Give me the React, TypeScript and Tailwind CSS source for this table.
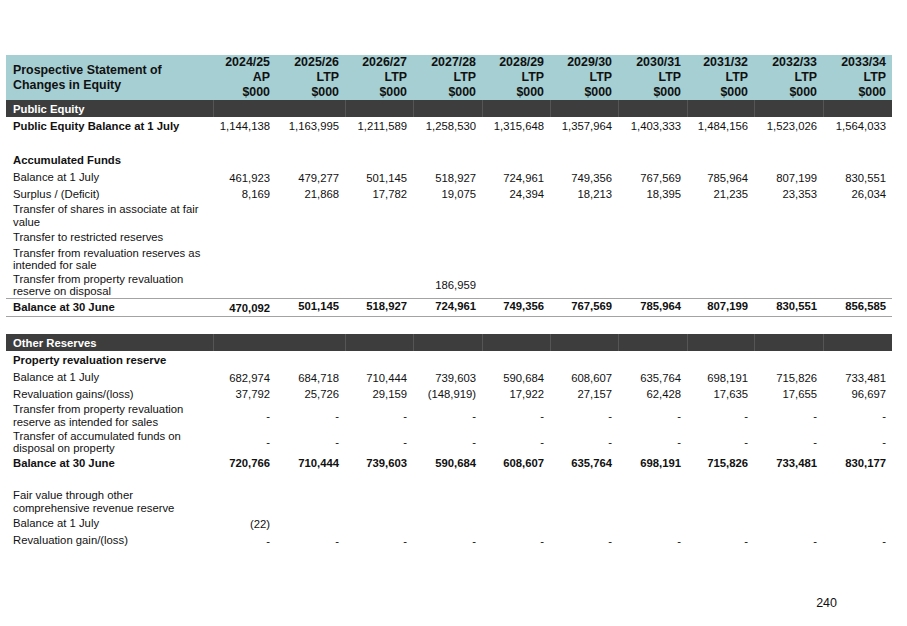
import React from 'react';

type Cell = string | null;

interface RowProps {
  label: React.ReactNode;
  values?: Cell[];
  h: string;
  bold?: boolean;
  boldLabel?: boolean;
  bordered?: boolean;
  firstLow?: boolean;
}

const grid =
  'grid grid-cols-[207px_63px_69px_68px_69px_68px_68px_69px_67px_69px_69px]';

const years = [
  ['2024/25', 'AP'],
  ['2025/26', 'LTP'],
  ['2026/27', 'LTP'],
  ['2027/28', 'LTP'],
  ['2028/29', 'LTP'],
  ['2029/30', 'LTP'],
  ['2030/31', 'LTP'],
  ['2031/32', 'LTP'],
  ['2032/33', 'LTP'],
  ['2033/34', 'LTP'],
];

const empty: Cell[] = Array(10).fill(null);
const dashes: Cell[] = Array(10).fill('-');

function Row({ label, values = empty, h, bold, boldLabel, bordered, firstLow }: RowProps) {
  return (
    <div
      className={`${grid} ${h} items-center ${
        bordered ? 'border-y border-[#a3a3a3]' : ''
      }`}
    >
      <div className={`pl-[7px] leading-[12.5px] ${bold || boldLabel ? 'font-bold' : ''}`}>
        {label}
      </div>
      {values.map((v, i) => (
        <div
          key={i}
          className={`pr-[6px] text-right ${bold ? 'font-bold' : ''} ${
            firstLow && i > 0 ? '-translate-y-[2px]' : ''
          }`}
        >
          {v}
        </div>
      ))}
    </div>
  );
}

function Band({ label }: { label: string }) {
  return (
    <div className={`${grid} h-[17px] bg-[#3d3d3d] text-white font-bold`}>
      <div className="pl-[7px] flex items-center">{label}</div>
      {empty.map((_, i) => (
        <div
          key={i}
          className={i === 1 ? '' : 'border-l border-[#555555]'}
        />
      ))}
    </div>
  );
}

export default function App() {
  return (
    <div
      className="w-[907px] h-[626px] bg-white text-[#111111] text-[11.3px] leading-[14px] pt-[55px] overflow-hidden"
      style={{ fontFamily: '"Liberation Sans", Arial, sans-serif' }}
    >
      <div className="ml-[6px] w-[886px]">
        {/* header */}
        <div className={`${grid} h-[45px] bg-[#a5cfd3] font-bold text-[12.4px] leading-[15px]`}>
          <div className="pl-[7px] flex flex-col justify-center">
            <span>Prospective Statement of</span>
            <span>Changes in Equity</span>
          </div>
          {years.map(([y, t]) => (
            <div key={y} className="pr-[6px] flex flex-col justify-center items-end">
              <span>{y}</span>
              <span>{t}</span>
              <span>$000</span>
            </div>
          ))}
        </div>

        <Band label="Public Equity" />
        <Row
          h="h-[18px]"
          boldLabel
          label="Public Equity Balance at 1 July"
          values={['1,144,138', '1,163,995', '1,211,589', '1,258,530', '1,315,648', '1,357,964', '1,403,333', '1,484,156', '1,523,026', '1,564,033']}
        />
        <div className="h-[16px]" />
        <Row h="h-[18px]" boldLabel label="Accumulated Funds" />
        <Row
          h="h-[17px]"
          label="Balance at 1 July"
          values={['461,923', '479,277', '501,145', '518,927', '724,961', '749,356', '767,569', '785,964', '807,199', '830,551']}
        />
        <Row
          h="h-[16px]"
          label="Surplus / (Deficit)"
          values={['8,169', '21,868', '17,782', '19,075', '24,394', '18,213', '18,395', '21,235', '23,353', '26,034']}
        />
        <Row
          h="h-[27px]"
          label={
            <>
              Transfer of shares in associate at fair
              <br />
              value
            </>
          }
        />
        <Row h="h-[17px]" label="Transfer to restricted reserves" />
        <Row
          h="h-[26px]"
          label={
            <>
              Transfer from revaluation reserves as
              <br />
              intended for sale
            </>
          }
        />
        <Row
          h="h-[26px]"
          label={
            <>
              Transfer from property revaluation
              <br />
              reserve on disposal
            </>
          }
          values={[null, null, null, '186,959', null, null, null, null, null, null]}
        />
        <Row
          h="h-[19px]"
          bold
          bordered
          firstLow
          label="Balance at 30 June"
          values={['470,092', '501,145', '518,927', '724,961', '749,356', '767,569', '785,964', '807,199', '830,551', '856,585']}
        />
        <div className="h-[17px]" />

        <Band label="Other Reserves" />
        <Row h="h-[18px]" boldLabel label="Property revaluation reserve" />
        <Row
          h="h-[17px]"
          label="Balance at 1 July"
          values={['682,974', '684,718', '710,444', '739,603', '590,684', '608,607', '635,764', '698,191', '715,826', '733,481']}
        />
        <Row
          h="h-[16px]"
          label="Revaluation gains/(loss)"
          values={['37,792', '25,726', '29,159', '(148,919)', '17,922', '27,157', '62,428', '17,635', '17,655', '96,697']}
        />
        <Row
          h="h-[27px]"
          label={
            <>
              Transfer from property revaluation
              <br />
              reserve as intended for sales
            </>
          }
          values={dashes}
        />
        <Row
          h="h-[26px]"
          label={
            <>
              Transfer of accumulated funds on
              <br />
              disposal on property
            </>
          }
          values={dashes}
        />
        <Row
          h="h-[16px]"
          bold
          label="Balance at 30 June"
          values={['720,766', '710,444', '739,603', '590,684', '608,607', '635,764', '698,191', '715,826', '733,481', '830,177']}
        />
        <div className="h-[17px]" />
        <Row
          h="h-[27px]"
          label={
            <>
              Fair value through other
              <br />
              comprehensive revenue reserve
            </>
          }
        />
        <Row
          h="h-[17px]"
          label="Balance at 1 July"
          values={['(22)', null, null, null, null, null, null, null, null, null]}
        />
        <Row h="h-[17px]" label="Revaluation gain/(loss)" values={dashes} />
      </div>

      <div className="flex justify-end pr-[70px] pt-[47px] text-[12.5px] leading-[15px]">
        240
      </div>
    </div>
  );
}
